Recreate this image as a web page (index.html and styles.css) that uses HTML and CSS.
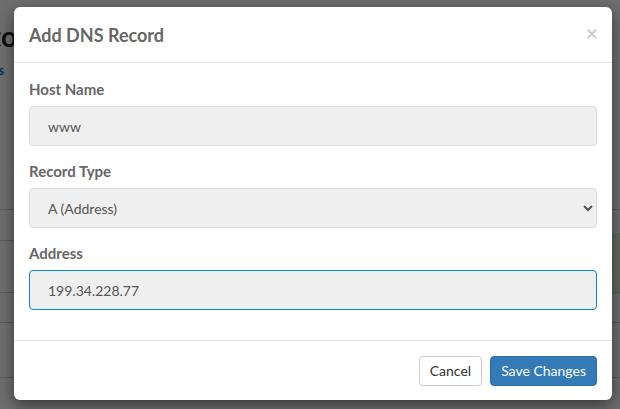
FILE: index.html
```html
<!DOCTYPE html>
<html>
<head>
<meta charset="utf-8">
<link rel="stylesheet" href="styles.css">
</head>
<body>
<div class="page">
  <div class="page-head">
    <h1 class="page-title">Zone Editor</h1>
    <a class="page-link">Status</a>
  </div>
  <div class="page-table">
    <div class="row r1"></div>
    <div class="row r2"><span class="green-cell"></span></div>
    <div class="row r3"></div>
    <div class="row r4"></div>
    <div class="row r5"><span class="edge-text">F</span></div>
  </div>
</div>
<div class="overlay"></div>
<div class="modal">
  <div class="modal-header">
    <h4 class="modal-title">Add DNS Record</h4>
    <span class="close">&times;</span>
  </div>
  <div class="modal-body">
    <div class="form-group">
      <label class="form-label">Host Name</label>
      <input class="form-control" type="text" value="www">
    </div>
    <div class="form-group">
      <label class="form-label">Record Type</label>
      <select class="form-control form-select">
        <option>A (Address)</option>
      </select>
    </div>
    <div class="form-group">
      <label class="form-label">Address</label>
      <input class="form-control focused" type="text" value="199.34.228.77">
    </div>
  </div>
  <div class="modal-footer">
    <button class="btn btn-default">Cancel</button>
    <button class="btn btn-primary">Save Changes</button>
  </div>
</div>
</body>
</html>
```

FILE: styles.css
```css
html, body {
  margin: 0;
  padding: 0;
  width: 620px;
  height: 409px;
  overflow: hidden;
  font-family: Lato, "Open Sans", sans-serif;
  background: #ffffff;
}

.page {
  width: 620px;
  height: 409px;
  display: flex;
  flex-direction: column;
  overflow: hidden;
}

.page-head {
  height: 80px;
  box-sizing: border-box;
  display: flex;
  flex-direction: column;
  align-items: flex-start;
  padding-top: 20px;
  margin-left: -118px;
}

.page-title {
  margin: 0;
  font-size: 28px;
  font-weight: 700;
  color: #222;
  line-height: 32px;
}

.page-link {
  margin-top: 10px;
  margin-left: 86px;
  font-size: 13px;
  font-weight: 700;
  color: #1c6bb0;
}

.page-table {
  margin-top: 129px;
  display: flex;
  flex-direction: column;
}

.row {
  border-top: 1px solid #ccc;
  box-sizing: border-box;
  display: flex;
  justify-content: flex-end;
}

.r1 { height: 31px; }
.r2 { height: 52px; }
.r3 { height: 30px; }
.r4 { height: 55px; }
.r5 { height: 32px; }

.green-cell {
  width: 20px;
  height: 61px;
  margin-top: -8px;
  background: #dff0d8;
}

.edge-text {
  font-size: 16px;
  color: #222;
  margin-right: -8px;
  margin-top: 8px;
}

.overlay {
  position: absolute;
  left: 0;
  top: 0;
  width: 620px;
  height: 409px;
  background: rgba(0, 0, 0, 0.57);
}

.modal {
  position: absolute;
  left: 14px;
  top: 7px;
  width: 598px;
  background: #fff;
  border-radius: 6px;
  box-shadow: 0 5px 15px rgba(0, 0, 0, 0.5);
  display: flex;
  flex-direction: column;
}

.modal-header {
  height: 56px;
  box-sizing: border-box;
  border-bottom: 1px solid #e5e5e5;
  padding: 0 15px;
  display: flex;
  align-items: center;
  justify-content: space-between;
}

.modal-title {
  margin: 0;
  font-size: 18px;
  font-weight: 700;
  color: #666;
  line-height: 20px;
}

.close {
  font-size: 21px;
  font-weight: 700;
  color: #000;
  opacity: 0.2;
  line-height: 1;
  margin-right: -1px;
  margin-top: -5px;
}

.modal-body {
  padding: 16px 15px 30px;
  display: flex;
  flex-direction: column;
  gap: 15px;
}

.form-group {
  display: flex;
  flex-direction: column;
}

.form-label {
  font-size: 15px;
  font-weight: 700;
  color: #666;
  line-height: 20px;
  margin-bottom: 7px;
}

.form-control {
  height: 40px;
  box-sizing: border-box;
  border: 1px solid #dcdcdc;
  border-radius: 4px;
  background: #efefef;
  padding: 0 18px;
  font-family: Lato, "Open Sans", sans-serif;
  font-size: 14px;
  color: #555;
  outline: none;
  margin: 0;
}

.form-select {
  padding-left: 14px;
  padding-right: 6px;
}

.focused {
  border-color: #0b86d1;
}

.modal-footer {
  height: 60px;
  box-sizing: border-box;
  border-top: 1px solid #e5e5e5;
  padding: 0 15px;
  display: flex;
  align-items: center;
  justify-content: flex-end;
  gap: 8px;
}

.btn {
  height: 30px;
  box-sizing: border-box;
  border-radius: 4px;
  font-family: Lato, "Open Sans", sans-serif;
  font-size: 14px;
  padding: 0 10px;
  margin: 0;
  cursor: pointer;
}

.btn-default {
  background: #fff;
  border: 1px solid #ccc;
  color: #333;
}

.btn-primary {
  background: #337ab7;
  border: 1px solid #2e6da4;
  color: #fff;
}
```
